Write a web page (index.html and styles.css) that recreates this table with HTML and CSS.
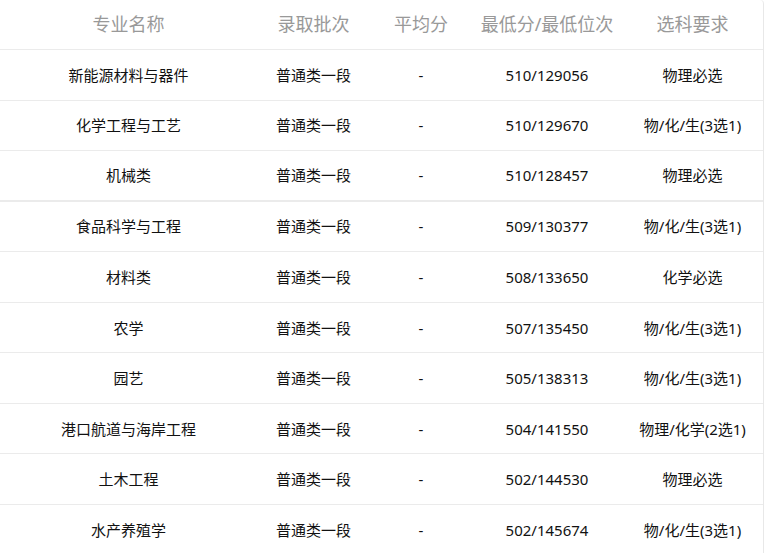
FILE: index.html
```html
<!DOCTYPE html>
<html lang="zh-CN">
<head>
<meta charset="utf-8">
<link rel="stylesheet" href="styles.css">
</head>
<body>
<div class="table">
  <div class="row head">
    <div class="c">专业名称</div><div class="c">录取批次</div><div class="c">平均分</div><div class="c">最低分/最低位次</div><div class="c">选科要求</div>
  </div>
  <div class="row"><div class="c">新能源材料与器件</div><div class="c">普通类一段</div><div class="c">-</div><div class="c">510/129056</div><div class="c">物理必选</div></div>
  <div class="row"><div class="c">化学工程与工艺</div><div class="c">普通类一段</div><div class="c">-</div><div class="c">510/129670</div><div class="c">物/化/生(3选1)</div></div>
  <div class="row thick"><div class="c">机械类</div><div class="c">普通类一段</div><div class="c">-</div><div class="c">510/128457</div><div class="c">物理必选</div></div>
  <div class="row"><div class="c">食品科学与工程</div><div class="c">普通类一段</div><div class="c">-</div><div class="c">509/130377</div><div class="c">物/化/生(3选1)</div></div>
  <div class="row"><div class="c">材料类</div><div class="c">普通类一段</div><div class="c">-</div><div class="c">508/133650</div><div class="c">化学必选</div></div>
  <div class="row"><div class="c">农学</div><div class="c">普通类一段</div><div class="c">-</div><div class="c">507/135450</div><div class="c">物/化/生(3选1)</div></div>
  <div class="row"><div class="c">园艺</div><div class="c">普通类一段</div><div class="c">-</div><div class="c">505/138313</div><div class="c">物/化/生(3选1)</div></div>
  <div class="row"><div class="c">港口航道与海岸工程</div><div class="c">普通类一段</div><div class="c">-</div><div class="c">504/141550</div><div class="c">物理/化学(2选1)</div></div>
  <div class="row"><div class="c">土木工程</div><div class="c">普通类一段</div><div class="c">-</div><div class="c">502/144530</div><div class="c">物理必选</div></div>
  <div class="row last"><div class="c">水产养殖学</div><div class="c">普通类一段</div><div class="c">-</div><div class="c">502/145674</div><div class="c">物/化/生(3选1)</div></div>
</div>
</body>
</html>
```
FILE: styles.css
```css
html, body {
  margin: 0;
  padding: 0;
  background: #fff;
}
body {
  font-family: "Noto Sans", "Noto Sans CJK SC", sans-serif;
  color: #111;
  overflow: hidden;
}
.table {
  width: 764px;
  height: 553px;
  box-sizing: border-box;
  border-right: 1px solid #e8e8e8;
  border-top-right-radius: 4px;
  overflow: hidden;
}
.row {
  display: grid;
  grid-template-columns: 257px 113px 102px 150px 141px;
  height: 49.55px;
  border-bottom: 1px solid #ebebeb;
  align-items: center;
  font-size: 15px;
}
.row.head {
  height: 49px;
  font-size: 18px;
  color: #999;
}
.row.head .c {
  position: relative;
  top: -1px;
}
.row.thick {
  border-bottom: 2px solid #ebebeb;
  height: 48.55px;
}
.c {
  text-align: center;
  white-space: nowrap;
  line-height: 20px;
}
```
